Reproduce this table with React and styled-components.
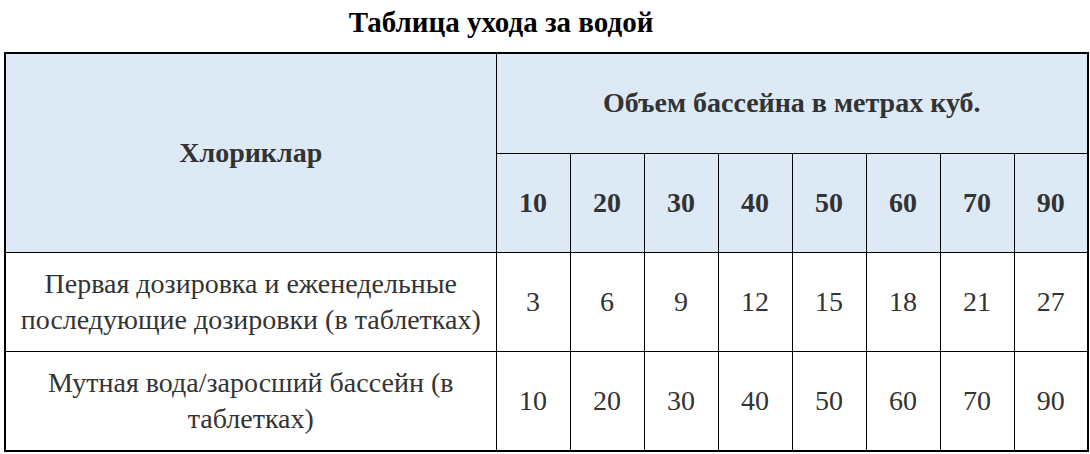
import React from 'react';
import styled, { createGlobalStyle } from 'styled-components';

const serif = '"Liberation Serif", "Times New Roman", "DejaVu Serif", serif';

const GlobalStyle = createGlobalStyle`
  html, body {
    margin: 0;
    padding: 0;
    background: #fff;
    font-family: ${serif};
  }
`;

const Page = styled.div`
  width: 1090px;
  height: 454px;
  overflow: hidden;
  padding-left: 4px;
  box-sizing: border-box;
  font-family: ${serif};
`;

const Title = styled.h2`
  width: 994px;
  margin: 0;
  padding-top: 5px;
  height: 52px;
  box-sizing: border-box;
  text-align: center;
  font-family: ${serif};
  font-size: 29px;
  font-weight: bold;
  color: #000;
  line-height: 34px;
`;

const Table = styled.table`
  width: 1082px;
  border-collapse: collapse;
  border: 2px solid #000;
  table-layout: fixed;
  font-family: ${serif};
`;

const Row = styled.tr`
  height: ${props => props.h}px;
`;

const HeadCell = styled.th`
  background: #dde9f5;
  border: 1px solid #000;
  color: #333;
  font-family: ${serif};
  font-size: 28px;
  font-weight: bold;
  text-align: center;
  vertical-align: middle;
  padding: 0;
`;

const Cell = styled.td`
  border: 1px solid #000;
  color: #333;
  font-family: ${serif};
  font-size: 28px;
  line-height: 36px;
  text-align: center;
  vertical-align: middle;
  padding: 0 10px;
`;

const NumCell = styled(Cell)`
  padding: 0;
`;

const sizes = [10, 20, 30, 40, 50, 60, 70, 90];

const rows = [
  {
    label: 'Первая дозировка и еженедельные последующие дозировки (в таблетках)',
    values: [3, 6, 9, 12, 15, 18, 21, 27],
    h: 99,
  },
  {
    label: 'Мутная вода/заросший бассейн (в таблетках)',
    values: [10, 20, 30, 40, 50, 60, 70, 90],
    h: 100,
  },
];

export default function App() {
  return (
    <Page>
      <GlobalStyle />
      <Title>Таблица ухода за водой</Title>
      <Table>
        <colgroup>
          <col style={{ width: 491 }} />
          {sizes.map(s => <col key={s} style={{ width: 74 }} />)}
        </colgroup>
        <thead>
          <Row h={100}>
            <HeadCell rowSpan={2}>Хлориклар</HeadCell>
            <HeadCell colSpan={8}>Объем бассейна в метрах куб.</HeadCell>
          </Row>
          <Row h={99}>
            {sizes.map(s => <HeadCell key={s}>{s}</HeadCell>)}
          </Row>
        </thead>
        <tbody>
          {rows.map(row => (
            <Row key={row.label} h={row.h}>
              <Cell>{row.label}</Cell>
              {row.values.map((v, i) => <NumCell key={i}>{v}</NumCell>)}
            </Row>
          ))}
        </tbody>
      </Table>
    </Page>
  );
}
